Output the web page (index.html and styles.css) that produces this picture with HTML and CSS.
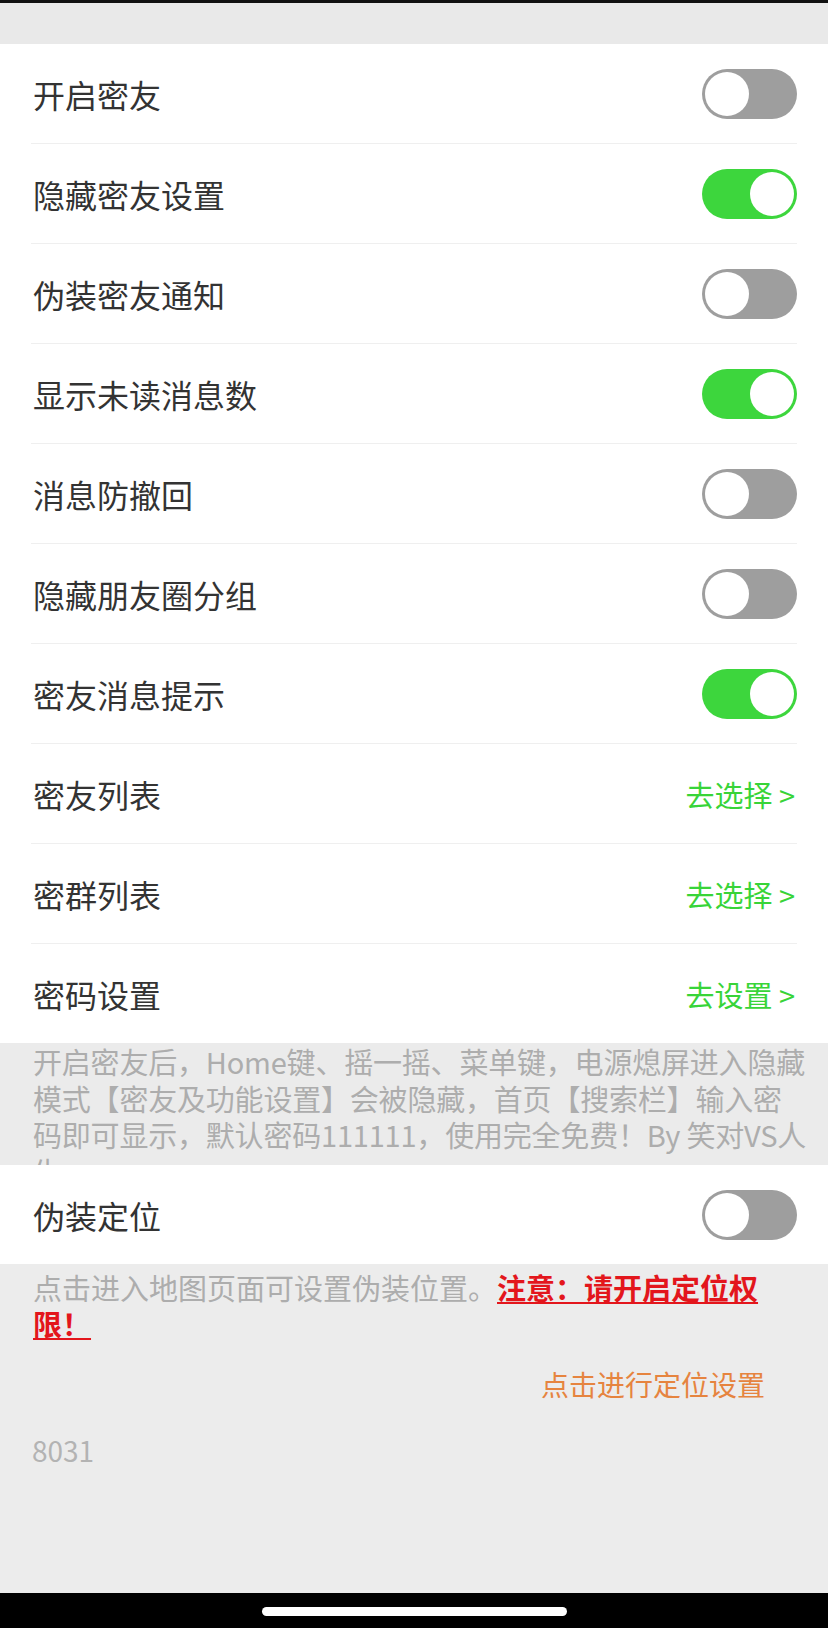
FILE: index.html
```html
<!DOCTYPE html>
<html lang="zh-CN">
<head>
    <meta charset="UTF-8">
    <meta name="viewport" content="width=device-width, initial-scale=1.0">
    <title>密友设置</title>
    <link rel="stylesheet" href="styles.css">
</head>
<body>
    <div class="topline"></div>
    <div class="header"></div>

    <div class="page">
        <div class="group">
            <div class="row">
                <span class="label">开启密友</span>
                <span class="switch"></span>
            </div>
            <div class="row">
                <span class="label">隐藏密友设置</span>
                <span class="switch on"></span>
            </div>
            <div class="row">
                <span class="label">伪装密友通知</span>
                <span class="switch"></span>
            </div>
            <div class="row">
                <span class="label">显示未读消息数</span>
                <span class="switch on"></span>
            </div>
            <div class="row">
                <span class="label">消息防撤回</span>
                <span class="switch"></span>
            </div>
            <div class="row">
                <span class="label">隐藏朋友圈分组</span>
                <span class="switch"></span>
            </div>
            <div class="row">
                <span class="label">密友消息提示</span>
                <span class="switch on"></span>
            </div>
            <div class="row">
                <span class="label">密友列表</span>
                <a class="link">去选择 &gt;</a>
            </div>
            <div class="row">
                <span class="label">密群列表</span>
                <a class="link">去选择 &gt;</a>
            </div>
            <div class="row">
                <span class="label">密码设置</span>
                <a class="link">去设置 &gt;</a>
            </div>
        </div>

        <div class="desc">
            开启密友后，Home键、摇一摇、菜单键，电源熄屏进入隐藏<br>模式【密友及功能设置】会被隐藏，首页【搜索栏】输入密<br>码即可显示，默认密码111111，使用完全免费！By 笑对VS人<br>生
        </div>

        <div class="group">
            <div class="row">
                <span class="label">伪装定位</span>
                <span class="switch"></span>
            </div>
        </div>

        <div class="note">
            点击进入地图页面可设置伪装位置。<span class="warn">注意：请开启定位权限！</span>
        </div>

        <div class="action">点击进行定位设置</div>

        <div class="version">8031</div>
    </div>

    <div class="navbar">
        <span class="pill"></span>
    </div>
</body>
</html>
```

FILE: styles.css
```css
html, body {
    height: 100%;
}

body {
    margin: 0;
    background-color: #ececec;
    font-family: "Noto Sans CJK SC", "Noto Sans", sans-serif;
    display: flex;
    flex-direction: column;
}

.topline {
    height: 3px;
    background-color: #111;
}

.header {
    height: 41px;
    background-color: #e9e9e9;
}

.page {
    flex: 1;
}

.group {
    background-color: #fff;
}

.row {
    height: 99px;
    margin: 0 31px;
    display: flex;
    align-items: center;
    justify-content: space-between;
    border-bottom: 1px solid #efefef;
}

.row:last-child {
    border-bottom: none;
}

.label {
    padding-left: 2px;
    font-size: 32px;
    color: #333;
}

.switch {
    position: relative;
    width: 95px;
    height: 50px;
    border-radius: 25px;
    background-color: #9e9e9e;
}

.switch::after {
    content: "";
    position: absolute;
    top: 3px;
    left: 3px;
    width: 44px;
    height: 44px;
    border-radius: 50%;
    background-color: #fff;
}

.switch.on {
    background-color: #3dd63d;
}

.switch.on::after {
    left: 48px;
}

.link {
    padding-right: 2px;
    font-size: 29px;
    color: #38d438;
}

.desc {
    box-sizing: border-box;
    height: 122px;
    overflow: hidden;
    padding: 0 16px 0 33px;
    font-size: 29px;
    line-height: 36.5px;
    letter-spacing: -0.2px;
    white-space: nowrap;
    color: #adadad;
    background-color: #ebebeb;
}

.note {
    padding: 5px 33px 0;
    font-size: 29px;
    line-height: 36px;
    color: #adadad;
}

.warn {
    color: #e3161c;
    font-weight: bold;
    text-decoration: underline;
}

.action {
    margin-top: 25px;
    padding-right: 63px;
    text-align: right;
    font-size: 28px;
    line-height: 36px;
    color: #e6843f;
}

.version {
    margin-top: 30px;
    padding-left: 32px;
    font-size: 28px;
    line-height: 36px;
    color: #b3b3b3;
}

.navbar {
    height: 35px;
    background-color: #000;
    display: flex;
    justify-content: center;
    padding-top: 14px;
    box-sizing: border-box;
}

.pill {
    width: 305px;
    height: 9px;
    border-radius: 5px;
    background-color: #fff;
}
```
